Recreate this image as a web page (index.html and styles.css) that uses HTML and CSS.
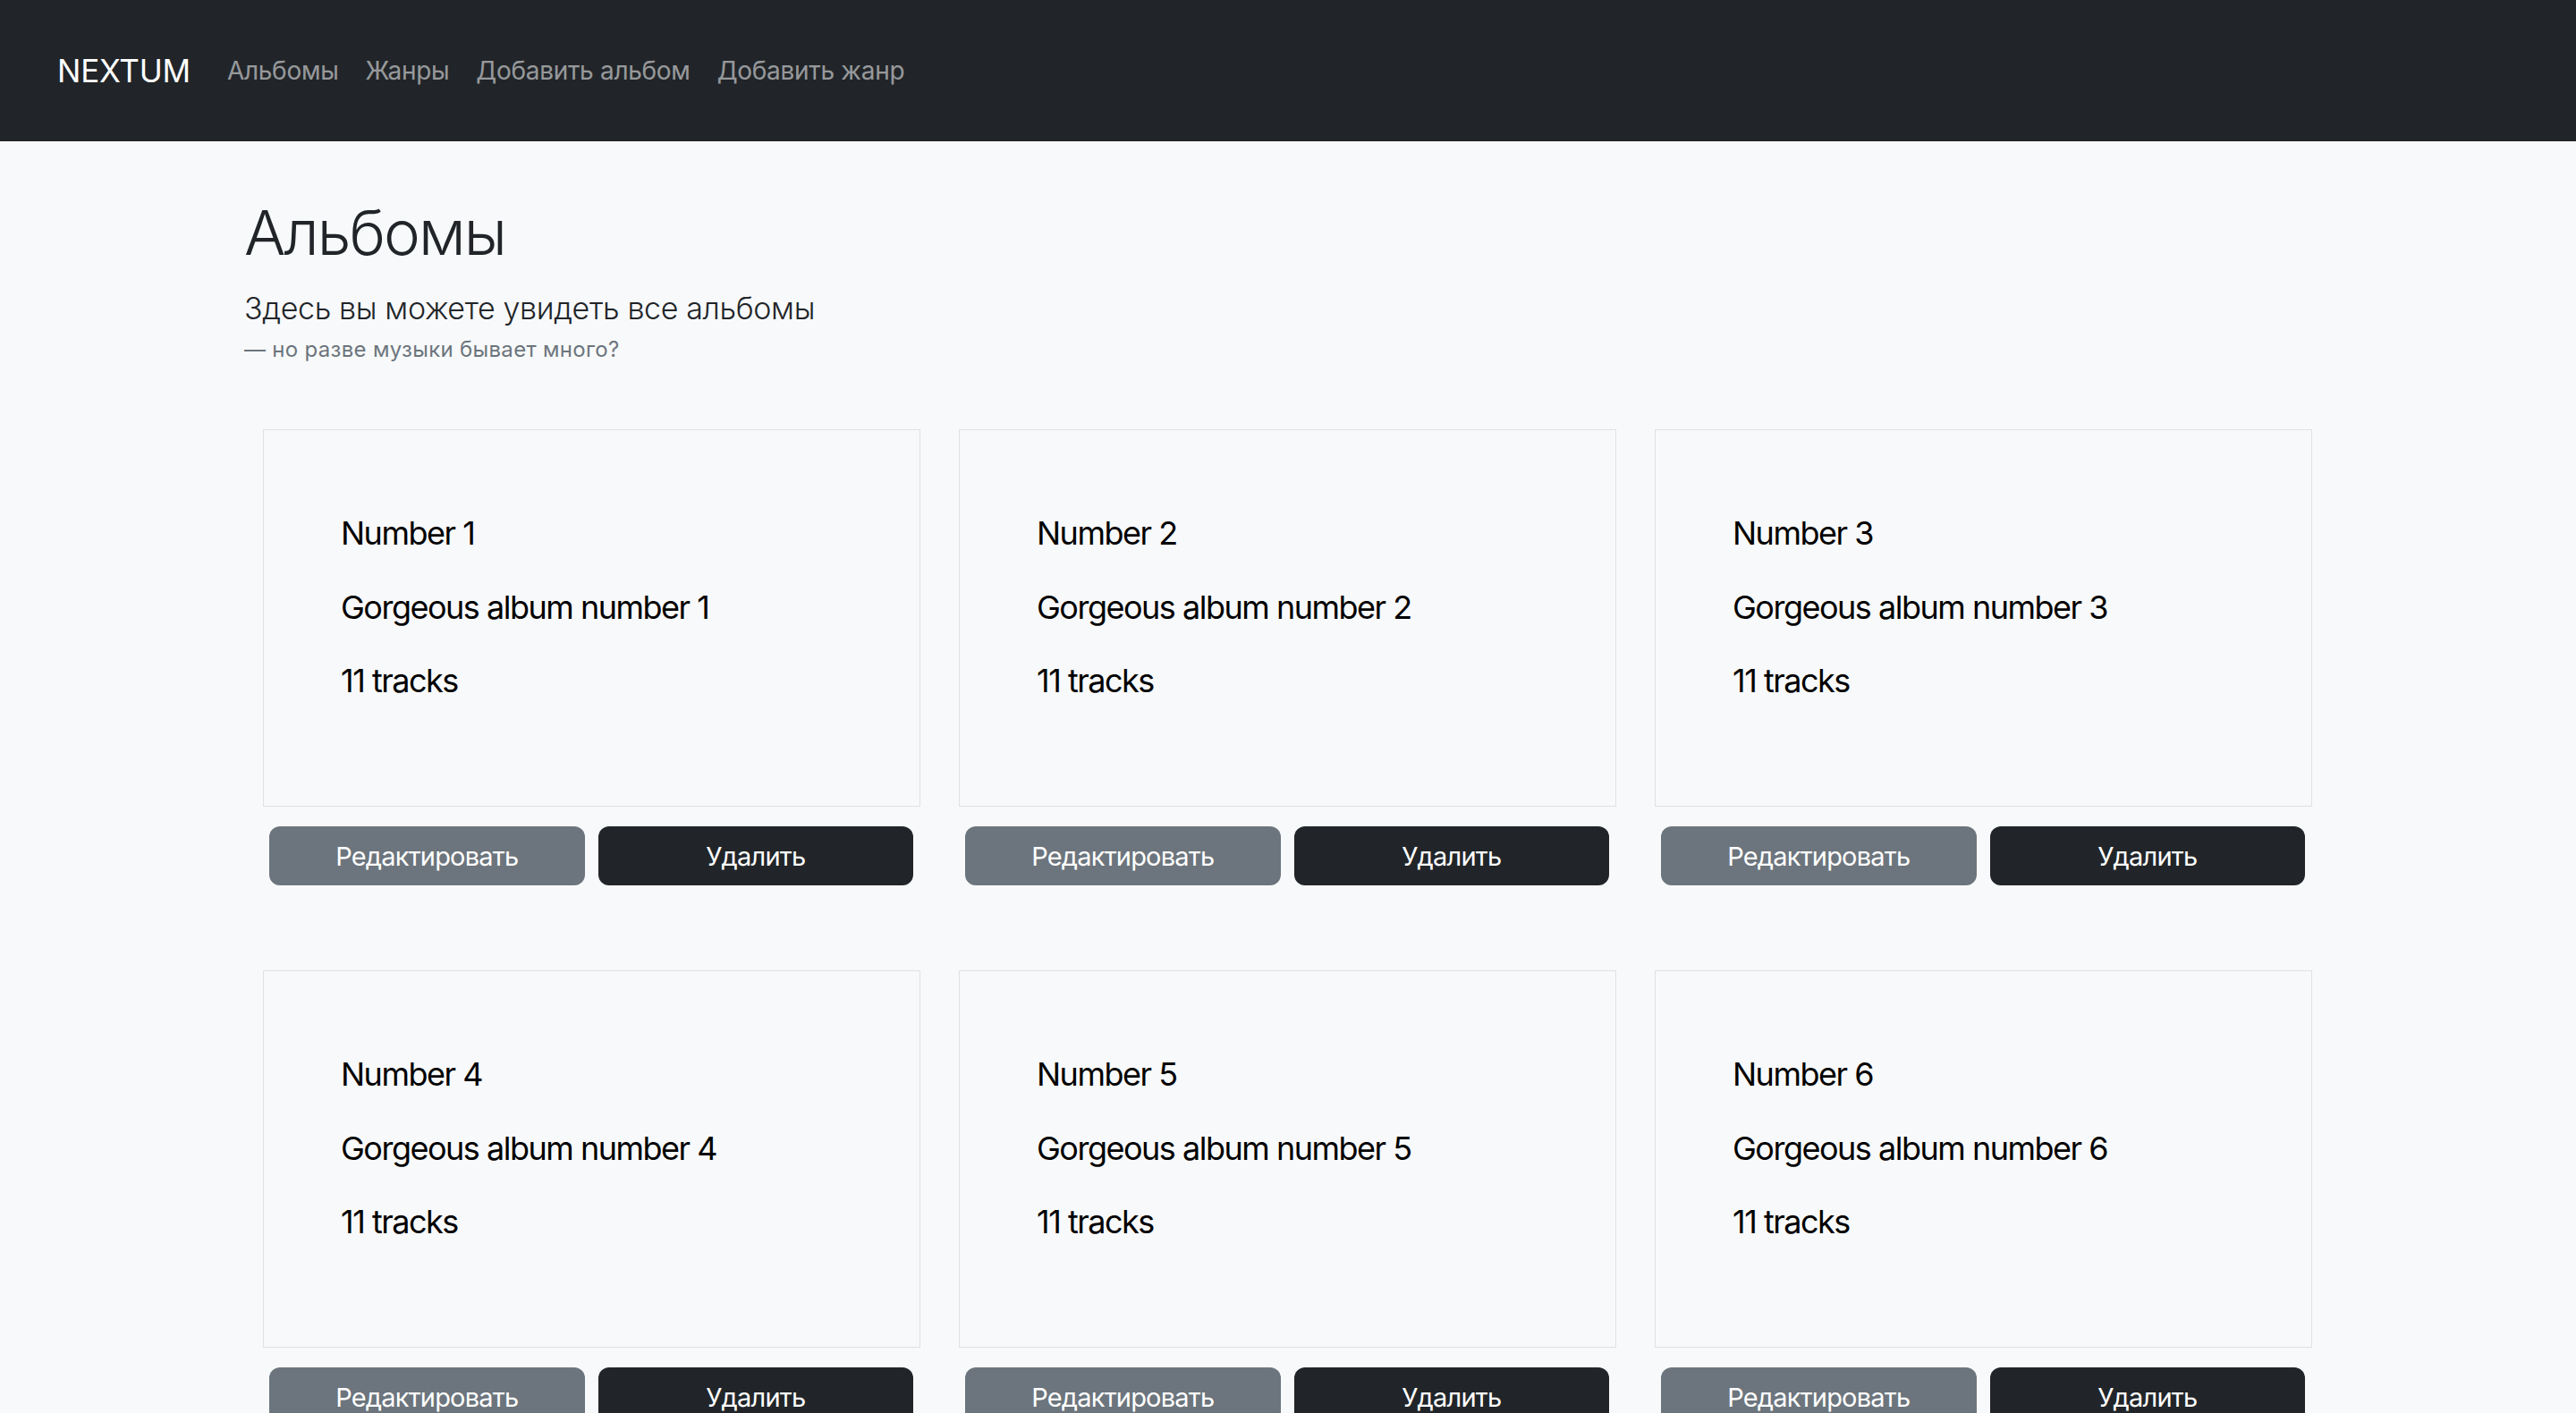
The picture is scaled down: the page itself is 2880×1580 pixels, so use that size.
FILE: index.html
```html
<!DOCTYPE html>
<html lang="ru">
<head>
<meta charset="utf-8">
<title>NEXTUM — Альбомы</title>
<link rel="stylesheet" href="styles.css">
</head>
<body>
<nav class="navbar">
  <a class="brand" href="#">NEXTUM</a>
  <ul class="nav-links">
    <li><a href="#">Альбомы</a></li>
    <li><a href="#">Жанры</a></li>
    <li><a href="#">Добавить альбом</a></li>
    <li><a href="#">Добавить жанр</a></li>
  </ul>
</nav>
<main class="container">
  <header class="intro">
    <h1 class="title">Альбомы</h1>
    <p class="lead">Здесь вы можете увидеть все альбомы</p>
    <p class="note">— но разве музыки бывает много?</p>
  </header>
  <section class="grid">
    <div class="album">
      <div class="card">
        <p>Number 1</p>
        <p>Gorgeous album number 1</p>
        <p>11 tracks</p>
      </div>
      <div class="actions">
        <button class="btn btn-edit">Редактировать</button>
        <button class="btn btn-delete">Удалить</button>
      </div>
    </div>
    <div class="album">
      <div class="card">
        <p>Number 2</p>
        <p>Gorgeous album number 2</p>
        <p>11 tracks</p>
      </div>
      <div class="actions">
        <button class="btn btn-edit">Редактировать</button>
        <button class="btn btn-delete">Удалить</button>
      </div>
    </div>
    <div class="album">
      <div class="card">
        <p>Number 3</p>
        <p>Gorgeous album number 3</p>
        <p>11 tracks</p>
      </div>
      <div class="actions">
        <button class="btn btn-edit">Редактировать</button>
        <button class="btn btn-delete">Удалить</button>
      </div>
    </div>
    <div class="album">
      <div class="card">
        <p>Number 4</p>
        <p>Gorgeous album number 4</p>
        <p>11 tracks</p>
      </div>
      <div class="actions">
        <button class="btn btn-edit">Редактировать</button>
        <button class="btn btn-delete">Удалить</button>
      </div>
    </div>
    <div class="album">
      <div class="card">
        <p>Number 5</p>
        <p>Gorgeous album number 5</p>
        <p>11 tracks</p>
      </div>
      <div class="actions">
        <button class="btn btn-edit">Редактировать</button>
        <button class="btn btn-delete">Удалить</button>
      </div>
    </div>
    <div class="album">
      <div class="card">
        <p>Number 6</p>
        <p>Gorgeous album number 6</p>
        <p>11 tracks</p>
      </div>
      <div class="actions">
        <button class="btn btn-edit">Редактировать</button>
        <button class="btn btn-delete">Удалить</button>
      </div>
    </div>
  </section>
</main>
</body>
</html>
```

FILE: styles.css
```css
* { box-sizing: border-box; }

html, body {
  margin: 0;
  padding: 0;
  overflow: hidden;
}

body {
  background: #f8f9fa;
  color: #212529;
  font-family: Inter, "Noto Sans", "Liberation Sans", sans-serif;
}

.navbar {
  height: 158px;
  background: #212529;
  display: flex;
  align-items: center;
  padding: 0 64px;
}

.brand {
  color: #ffffff;
  font-size: 35px;
  letter-spacing: -0.2px;
  text-decoration: none;
  margin-right: 26px;
}

.nav-links {
  list-style: none;
  margin: 0;
  padding: 0;
  display: flex;
}

.nav-links a {
  display: block;
  padding: 0 15px;
  color: rgba(255, 255, 255, 0.55);
  font-size: 28px;
  letter-spacing: -0.3px;
  text-decoration: none;
}

.container {
  width: 2334px;
  margin: 0 auto;
}

.intro {
  padding-top: 61px;
}

.title {
  margin: 0;
  font-size: 69px;
  font-weight: 300;
  line-height: 1.2;
  letter-spacing: -1.9px;
}

.lead {
  margin: 17px 0 0;
  font-size: 34px;
  font-weight: 300;
  line-height: 1.5;
  letter-spacing: -0.36px;
}

.note {
  margin: 4px 0 0;
  font-size: 24px;
  line-height: 1.4;
  letter-spacing: 0.3px;
  color: #6c757d;
}

.grid {
  margin: 73px 21px 0;
  display: grid;
  grid-template-columns: repeat(3, 735px);
  column-gap: 43px;
  row-gap: 95px;
}

.card {
  height: 422px;
  border: 1px solid #dee2e6;
  background: #f8f9fa;
  padding: 88px 86px 0;
  color: #000000;
}

.card p {
  margin: 0 0 28.5px;
  font-size: 36px;
  line-height: 54px;
  letter-spacing: -1.5px;
}

.actions {
  margin-top: 22px;
  padding: 0 8px 0 7px;
  display: flex;
  gap: 15px;
}

.btn {
  flex: 1;
  height: 66px;
  border: none;
  border-radius: 12px;
  color: #ffffff;
  font-family: Inter, "Noto Sans", "Liberation Sans", sans-serif;
  font-size: 29px;
  letter-spacing: -0.8px;
  cursor: pointer;
}

.btn-edit { background: #6c757d; }
.btn-delete { background: #212529; }
```
